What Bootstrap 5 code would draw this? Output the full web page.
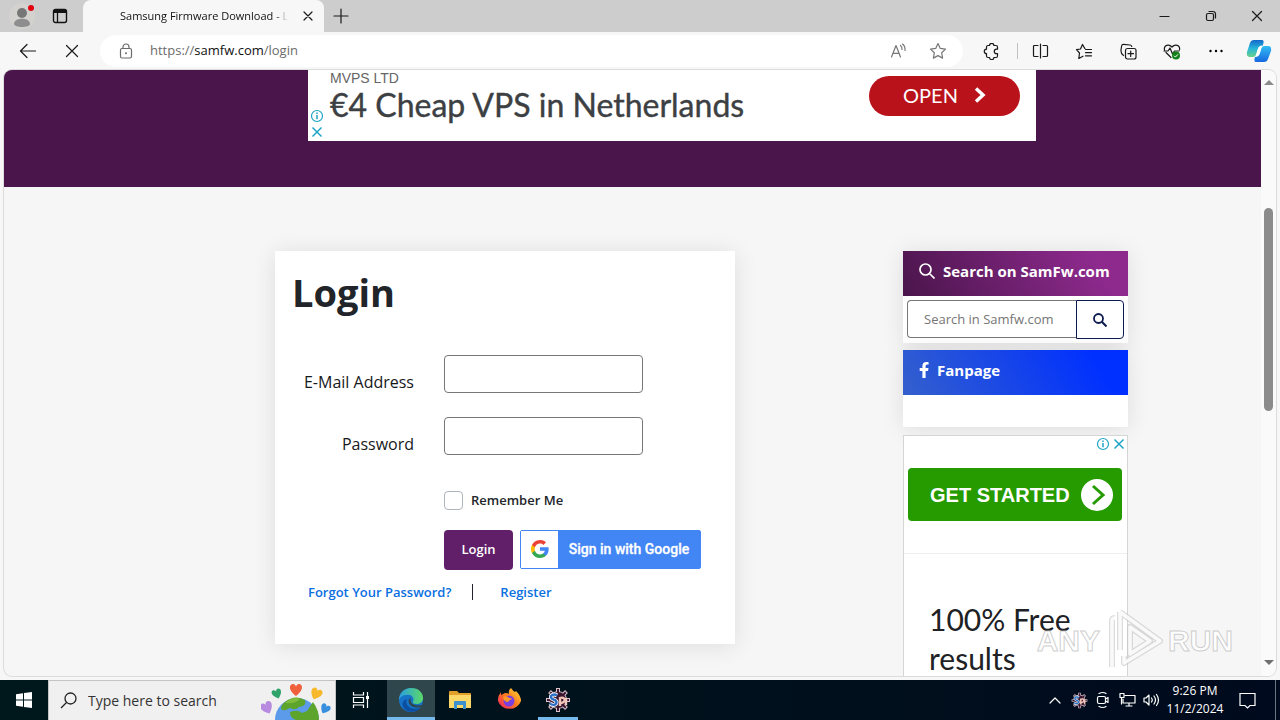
<!DOCTYPE html>
<html lang="en">
<head>
<meta charset="utf-8">
<meta name="viewport" content="width=device-width, initial-scale=1">
<title>Samsung Firmware Download - Login</title>
<link href="https://cdn.jsdelivr.net/npm/bootstrap@5.3.0/dist/css/bootstrap.min.css" rel="stylesheet">
<style>
body{font-family:"Open Sans","Noto Sans",sans-serif;font-size:14px;color:#212529;background:#f7f7f7}
svg{display:block;flex:none}
button{font-family:inherit}
.ico-btn{background:none;border:0;padding:0;width:44px;display:flex;align-items:center;justify-content:center;flex:none;color:#1a1a1a}
.ln{fill:none;stroke:currentColor;stroke-width:1.2;stroke-linecap:round;stroke-linejoin:round}
/* browser frame */
.titlebar{height:32px;background:#cdcdcd}
.win-btn{width:46px}
.tab{width:241px;background:#f7f7f7;border-radius:8px 8px 0 0;padding:0 8px 0 37px;color:#111;font-size:11px}
.tab-title{-webkit-mask-image:linear-gradient(90deg,#000 92%,transparent)}
.toolbar{height:38px;background:#f7f7f7;padding:0 0 0 6px}
.omnibox{height:32px;background:#fff;border-radius:16px;margin:0 6px;padding:0 14px 0 18px;font-size:13px;color:#6b6b6b}
.omnibox b{font-weight:400;color:#111}
.omnibox .ico-btn{width:40px;color:#777}
.viewport{margin:0 4px 4px;border-radius:8px;overflow:hidden;min-height:0;box-shadow:0 0 0 1px #dcdcdc;background:#f6f6f6}
.page{overflow:hidden;min-width:0}
.scroll{width:15px;background:#fafafa;padding:9px 0 10px}
.scroll .thumb{width:9px;flex:0 0 203px;background:#8b8b8b;border-radius:5px}
/* page */
.cols{display:grid;grid-template-columns:271fr 460fr 168fr 225fr 133fr}
.hero{height:117px;background:#4a154b;padding:0 225px 0 304px}
.hero-ad{height:71px;background:#fff;padding:0 16px 0 0}
.hero-ad .ad-name{font:400 14px/16px "Liberation Sans",sans-serif;color:#666}
.hero-ad .ad-head{font:400 32px/38px Lato,sans-serif;color:#3c4043;-webkit-text-stroke:.4px #3c4043}
.ad-marks{color:#1fa5c4}
.open-btn{width:151px;height:40px;border:0;border-radius:20px;background:#b9121b;color:#fff;font:400 20px/38px Lato,sans-serif;margin-top:6px;padding:0 0 2px}
.panel{background:#fff;box-shadow:0 2px 22px rgba(0,0,0,.1)}
.login-panel{height:393px;padding:19px 17px 0;grid-column:2}
.login-panel h1{font-size:38px;line-height:44px;font-weight:700;margin:0 0 41px}
.f-row{display:grid;grid-template-columns:122px 1fr;column-gap:30px;margin-bottom:24px}
.f-row label{font-size:16px;line-height:20px;font-weight:500;text-align:right;padding-top:17px;white-space:nowrap;justify-self:end;color:#16191c}
.f-row .form-control{width:199px;height:38px;border:1px solid #76777a;border-radius:4px}
.f-side{margin-left:152px}
.f-side .form-check-input{width:19px;height:19px;margin:0;border:1px solid #adb5bd;border-radius:4px;float:none}
.f-side label{font-size:13px;font-weight:600}
.login-btn{width:69px;height:40px;border-radius:4px;background:#611f69;border:0;color:#fff;font-size:13px;font-weight:600;padding:0}
.google-btn{width:181px;height:39px;background:#4285f4;border:1px solid #4285f4;border-radius:2px;padding:0;color:#fff;font:500 14px/18px Roboto,sans-serif;-webkit-text-stroke:.3px #fff}
.google-btn .g-box{width:37px;height:37px;background:#fff}
.links{font-size:13px;font-weight:600;padding-left:16px;margin-top:12px;line-height:20px}
.links a{color:#0a6fe0;text-decoration:none}
.links .vr{width:1px;background:#212529;opacity:1;height:16px;margin:2px 27px 0 21px}
.side{grid-column:4;min-width:0}
.side-head{height:45px;padding:0 16px 5px;color:#fff;font-size:15px;font-weight:700;margin:0;white-space:nowrap}
.head-search{background:linear-gradient(60deg,#4a154b,#8e2a8e 85%)}
.head-fan{background:linear-gradient(60deg,#3460cc,#0030ff 85%)}
.search-box{padding:4px 4px 4px}
.search-box .form-control{height:38px;border:1px solid #76777a;border-right:0;border-radius:4px 0 0 4px;font-size:13px;padding:0 16px}
.search-box .form-control::placeholder{color:#757575}
.search-box .btn{width:48px;height:39px;border:1px solid #0b1a4f;border-radius:0 4px 4px 0;background:#fff;color:#0b1a4f;padding:0}
.side-ad{height:260px;background:#fff;border:1px solid #d5d5d5;margin-top:8px}
.start-btn{height:53px;margin:16px 5px 0 4px;background:#259b00;border:0;border-radius:4px;color:#fff;font:700 20px/24px "Liberation Sans",sans-serif;padding:0 9px 0 22px;white-space:nowrap}
.side-ad hr{margin:32px 0 0;border-color:#bbb}
.side-ad p{font:400 30px/39px Lato,sans-serif;color:#202124;padding:46px 25px 0}
.wmark{position:absolute;right:47px;bottom:47px;color:rgba(255,255,255,.8);font:700 30px/60px "Liberation Sans",sans-serif;-webkit-text-stroke:1px rgba(190,190,190,.75);pointer-events:none;gap:4px}
/* taskbar */
.taskbar{height:40px;background:linear-gradient(90deg,#00171c,#00101c 60%,#000a1e);color:#fff}
.taskbar .ico-btn{width:49px;color:#fff}
.taskbar .start{width:48px}
.task-search{width:288px;background:#f0f0f0;border:1px solid #c4c4c4;border-bottom:0;padding-left:11px}
.task-search input{border:0;background:none;color:#333;font-size:14px;outline:0;min-width:0;width:150px;padding:0}
.task-search input::placeholder{color:#333;opacity:1}
.on{border-bottom:3px solid #76b9ed!important;padding-top:3px!important}
.taskbar .edge{background:#30464d}
.taskbar .app{width:40px;margin:0 5px}
.taskbar .tray{width:24px}
.clock{width:64px;font-size:12px;line-height:18px;text-align:center}
.taskbar .note{width:40px}
.desk{width:5px;border-left:1px solid #6c7480;margin-left:8px}
</style>
</head>
<body class="vh-100 d-flex flex-column overflow-hidden">
<svg width="0" height="0" class="position-absolute">
  <symbol id="lens" viewBox="0 0 16 16"><path fill="none" stroke="currentColor" stroke-width="1.700" d="M12 6.500a5.500 5.500 0 1 1-11 0 5.500 5.500 0 0 1 11 0zM10.500 10.500l5 5"/></symbol>
  <symbol id="info" viewBox="0 0 14 14"><circle cx="7" cy="7" r="5.500" fill="none" stroke="currentColor" stroke-width="1.200"/><path stroke="currentColor" stroke-width="1.500" d="M7 6v4.200M7 3.600v1.300"/></symbol>
  <symbol id="cross" viewBox="0 0 14 14"><path fill="none" stroke="currentColor" stroke-width="1.500" d="M2.500 2.500l9 9M11.500 2.500l-9 9"/></symbol>
  <symbol id="gear" viewBox="0 0 26 26"><g fill="#d9c3cc"><circle cx="13" cy="13" r="9"/><path d="M11 1h4v24h-4zM1 11h24v4H1z"/><path d="M11 1h4v24h-4zM1 11h24v4H1z" transform="rotate(45 13 13)"/></g><g fill="#3c1830"><circle cx="13" cy="13" r="8"/><path d="M12 2h2v22h-2zM2 12h22v2H2z"/><path d="M12 2h2v22h-2zM2 12h22v2H2z" transform="rotate(45 13 13)"/></g><path d="M12 8.500C9 6.500 5.500 8 6 10.500s6 2 5.500 5S7 18.500 5 16.500" fill="none" stroke="#fff" stroke-width="4"/><path d="M12 8.500C9 6.500 5.500 8 6 10.500s6 2 5.500 5S7 18.500 5 16.500" fill="none" stroke="#2d6fc4" stroke-width="2.400"/><path d="M15 19v-8c5-2 7 4 1 5M21 11v7" fill="none" stroke="#f2c6b8" stroke-width="2.400"/></symbol>
</svg>

<header>
  <div class="titlebar d-flex">
    <button class="ico-btn" aria-label="Profile"><svg width="34" height="28" viewBox="0 0 34 28"><circle cx="17" cy="14" r="13" fill="#d4d2cf"/><circle cx="17" cy="11" r="5" fill="#777"/><path d="M9 22c0-7 16-7 16 0 0 4-16 4-16 0z" fill="#8e8e8e"/><circle cx="26" cy="6" r="3" fill="#e3000f"/></svg></button>
    <button class="ico-btn pe-2" style="width:39px" aria-label="Tab actions"><svg width="16" height="16" viewBox="0 0 16 16"><rect x="1.500" y="1.500" width="13" height="13" rx="2" fill="none" stroke="#111" stroke-width="1.400"/><path d="M1.500 2h13v3h-13z" fill="#111"/><path d="M5.500 5v9" stroke="#111" stroke-width="1.300"/></svg></button>
    <div class="tab d-flex align-items-center">
      <span class="tab-title text-nowrap">Samsung Firmware Download - L</span>
      <button class="ico-btn ms-auto" style="width:16px" aria-label="Close tab"><svg width="16" height="16" viewBox="0 0 16 16"><path class="ln" d="M4 4l8 8M12 4l-8 8"/></svg></button>
    </div>
    <button class="ico-btn" style="width:34px" aria-label="New tab"><svg width="16" height="16" viewBox="0 0 16 16"><path class="ln" d="M8 1v14M1 8h14"/></svg></button>
    <div class="ms-auto d-flex">
      <button class="ico-btn win-btn" aria-label="Minimise"><svg width="12" height="12" viewBox="0 0 12 12"><path class="ln" d="M1 6.500h9"/></svg></button>
      <button class="ico-btn win-btn" aria-label="Restore"><svg width="12" height="12" viewBox="0 0 12 12"><rect class="ln" x="1.500" y="3.500" width="7" height="7" rx="1.500"/><path class="ln" d="M4 1.500h4a2.500 2.500 0 0 1 2.500 2.500v4"/></svg></button>
      <button class="ico-btn win-btn" aria-label="Close"><svg width="12" height="12" viewBox="0 0 12 12"><path class="ln" d="M1.500 1.500l9 9M10.500 1.500l-9 9"/></svg></button>
    </div>
  </div>
  <div class="toolbar d-flex align-items-center">
    <button class="ico-btn" aria-label="Back"><svg width="18" height="16" viewBox="0 0 18 16"><path class="ln" d="M16.500 8H1.500M8 1.500L1.500 8 8 14.500"/></svg></button>
    <button class="ico-btn" aria-label="Stop"><svg width="14" height="14" viewBox="0 0 14 14"><path class="ln" d="M1.500 1.500l11 11M12.500 1.500l-11 11"/></svg></button>
    <div class="omnibox flex-grow-1 d-flex align-items-center">
      <svg width="16" height="16" viewBox="0 0 16 16"><rect class="ln" x="2.500" y="5.500" width="11" height="9.500" rx="1.500"/><path class="ln" d="M5 5.500V4a3 3 0 0 1 6 0v1.500"/><circle cx="8" cy="10.200" r="1" fill="currentColor"/></svg>
      <span class="ms-3">https://<b>samfw.com</b>/login</span>
      <button class="ico-btn ms-auto" aria-label="Read aloud"><svg width="17" height="16" viewBox="0 0 17 16"><path class="ln" d="M1.500 14L6 2.500 10.500 14M3 10.300h6M10.500 2.500c1.200 1 1.700 2.300 1.500 4M12.500 1c2 1.500 2.800 3.800 2.500 6.500"/></svg></button>
      <button class="ico-btn" aria-label="Favourite" style="margin-right:-9px"><svg width="18" height="18" viewBox="0 0 18 18"><path class="ln" d="M9 1.500l2.300 4.900 5.200.7-3.800 3.700.9 5.300L9 13.600l-4.600 2.500.9-5.300L1.500 7.100l5.200-.7z"/></svg></button>
    </div>
    <button class="ico-btn" aria-label="Extensions"><svg width="17" height="17" viewBox="0 0 17 17"><path class="ln" d="M5 2.500h1.500a2.200 2.200 0 0 1 4.400 0H13q1.500 0 1.500 1.500v2.200h-1a2.200 2.200 0 0 0 0 4.400h1V13q0 1.500-1.500 1.500h-2.100a2.200 2.200 0 0 1-4.400 0H5q-1.500 0-1.500-1.500v-2.400a2.200 2.200 0 0 1 0-4.400V4Q3.500 2.500 5 2.500z"/></svg></button>
    <div style="width:5px"><div class="vr d-block ms-1" style="height:16px"></div></div>
    <button class="ico-btn" aria-label="Split screen"><svg width="17" height="16" viewBox="0 0 17 16"><path class="ln" d="M8.500 1v14M6 2.500H2.500q-1 0-1 1v9q0 1 1 1H6M11 2.500h3.500q1 0 1 1v9q0 1-1 1H11"/></svg></button>
    <button class="ico-btn" aria-label="Favourites"><svg width="18" height="17" viewBox="0 0 18 17"><path class="ln" d="M10 5.500h-.2L7.500 1.500 5.500 6 1.500 6.700 4.500 10l-.7 5.500L8 13.200M10.500 6.500h6M10.500 9.700h6M10.500 12.800h6"/></svg></button>
    <button class="ico-btn" aria-label="Collections"><svg width="17" height="17" viewBox="0 0 17 17"><rect class="ln" x="5.500" y="5.500" width="10.500" height="10.500" rx="2"/><path class="ln" d="M10.700 8v5.500M8 10.700h5.500M3.500 12.500C1 11 .8 9 1 7l.6-4q.3-1.700 2-1.600l6.500.6q1.600.2 1.600 1.500"/></svg></button>
    <button class="ico-btn" aria-label="Performance"><svg width="18" height="17" viewBox="0 0 18 17"><path class="ln" d="M8 14.500L3 9.500M1.500 7C.5 2 6 .5 9 4c3-3.500 8.500-2 7.500 3M1 8h4l2-3 2.500 6L11.500 8H16"/><circle cx="13" cy="12.500" r="4" fill="#14801c"/><path d="M11 12.700l1.400 1.400 2.600-2.800" fill="none" stroke="#fff"/></svg></button>
    <button class="ico-btn" aria-label="More"><svg width="16" height="6" viewBox="0 0 16 6"><circle cx="2.500" cy="3" r="1.200"/><circle cx="8" cy="3" r="1.200"/><circle cx="13.500" cy="3" r="1.200"/></svg></button>
    <button class="ico-btn" style="width:42px" aria-label="Copilot"><svg width="26" height="24" viewBox="0 0 26 24"><defs><linearGradient id="c1" x2="0" y2="1"><stop stop-color="#1267c9"/><stop offset=".5" stop-color="#28b6d9"/><stop offset="1" stop-color="#69d18a"/></linearGradient><linearGradient id="c2" x2="0" y2="1"><stop stop-color="#32bdf2"/><stop offset="1" stop-color="#1668e0"/></linearGradient></defs><path d="M8 1h8q2 0 1.500 3l-1 3q-4 0-5 4l-1.500 5q-1 2-3 2H4q-4 0-3-5l3-9q1-3 4-3z" fill="url(#c1)"/><path d="M18 23h-8q-2 0-1.500-3l.5-2q4 0 5-4l1.500-5q1-2 3-2H22q4 0 3 5l-3 8q-1 3-4 3z" fill="url(#c2)"/><path d="M12.500 8.500q1-2 3.500-2l-2.500 8q-1 3-4 3z" fill="#fff"/></svg></button>
  </div>
</header>

<div class="viewport flex-grow-1 d-flex position-relative">
  <main class="page flex-grow-1">
    <section class="hero">
      <div class="hero-ad d-flex">
        <div class="ad-marks d-flex flex-column justify-content-end me-1 pb-1 ps-1 flex-shrink-0" style="width:14px"><svg width="14" height="14" style="margin:0 0 2px -2px"><use href="#info"/></svg><svg width="14" height="14" style="margin:0 0 -2px -2px"><use href="#cross"/></svg></div>
        <div class="flex-grow-1 text-nowrap ms-1"><div class="ad-name">MVPS LTD</div><div class="ad-head">€4 Cheap VPS in Netherlands</div></div>
        <button class="open-btn d-flex align-items-center justify-content-center flex-shrink-0">OPEN<svg class="ms-3" width="12" height="16" viewBox="0 0 12 16"><path d="M2 1.500L9 8l-7 6.500" fill="none" stroke="#fff" stroke-width="3.500"/></svg></button>
      </div>
    </section>
    <div class="cols" style="padding-top:64px">
      <section class="panel login-panel">
        <h1>Login</h1>
        <form>
          <div class="f-row"><label for="email">E-Mail Address</label><input class="form-control" type="email" id="email"></div>
          <div class="f-row"><label for="pw">Password</label><input class="form-control" type="password" id="pw"></div>
          <div class="f-side d-flex align-items-center gap-2" style="margin-top:36px"><input class="form-check-input" type="checkbox" id="rem"><label for="rem">Remember Me</label></div>
          <div class="f-side d-flex" style="margin-top:19px;gap:7px">
            <button type="button" class="login-btn flex-shrink-0">Login</button>
            <button type="button" class="google-btn d-flex align-items-center flex-shrink-0"><span class="g-box d-flex align-items-center justify-content-center"><svg width="18" height="18" viewBox="0 0 18 18"><path fill="#4285f4" d="M17.640 9.200c0-.64-.06-1.250-.16-1.840H9v3.480h4.840a4.140 4.140 0 0 1-1.800 2.720v2.260h2.910c1.700-1.570 2.690-3.880 2.690-6.620z"/><path fill="#34a853" d="M9 18c2.430 0 4.470-.8 5.960-2.180l-2.910-2.260c-.8.540-1.840.86-3.050.86-2.340 0-4.330-1.580-5.040-3.710H.96v2.330A9 9 0 0 0 9 18z"/><path fill="#fbbc05" d="M3.960 10.710a5.400 5.400 0 0 1 0-3.420V4.960H.96a9 9 0 0 0 0 8.080z"/><path fill="#ea4335" d="M9 3.580c1.320 0 2.510.45 3.440 1.350l2.580-2.580A9 9 0 0 0 .96 4.960l3 2.330C4.670 5.160 6.660 3.580 9 3.580z"/></svg></span><span class="flex-grow-1">Sign in with Google</span></button>
          </div>
          <div class="links d-flex"><a href="#">Forgot Your Password?</a><span class="vr"></span><a href="#">Register</a></div>
        </form>
      </section>
      <aside class="side">
        <div class="panel">
          <h2 class="side-head head-search d-flex align-items-center gap-2"><svg width="16" height="16"><use href="#lens"/></svg>Search on SamFw.com</h2>
          <form class="search-box d-flex"><input class="form-control" type="text" placeholder="Search in Samfw.com" aria-label="Search in Samfw.com"><button type="button" class="btn d-flex align-items-center justify-content-center flex-shrink-0" aria-label="Search"><svg width="14" height="14" viewBox="0 0 14 14"><circle cx="5.500" cy="5.500" r="4.500" fill="none" stroke="currentColor" stroke-width="1.800"/><path d="M8.800 8.800l4.700 4.700" stroke="currentColor" stroke-width="2"/></svg></button></form>
        </div>
        <div class="panel" style="margin-top:7px;height:77px">
          <h2 class="side-head head-fan d-flex align-items-center gap-2"><svg width="10" height="16" viewBox="0 0 10 16"><path fill="#fff" d="M9 9l.5-3H6.600V4.200c0-.8.4-1.600 1.700-1.600h1.300V.2S8.400 0 7.300 0C4.900 0 3.400 1.400 3.400 4v2H.7v3h2.700v7h3.200V9z"/></svg>Fanpage</h2>
        </div>
        <div class="side-ad">
          <div class="ad-marks d-flex justify-content-end" style="gap:2px;padding-right:1px"><svg width="14" height="16"><use href="#info"/></svg><svg width="14" height="16"><use href="#cross"/></svg></div>
          <div class="d-grid"><button class="start-btn d-flex align-items-center justify-content-between">GET STARTED<svg width="32" height="32" viewBox="0 0 32 32"><circle cx="16" cy="16" r="16" fill="#fff"/><path d="M12 7l10 9-10 9" fill="none" stroke="#259b00" stroke-width="3"/></svg></button></div>
          <hr>
          <p>100% Free results</p>
        </div>
      </aside>
    </div>
  </main>
  <div class="scroll d-flex flex-column align-items-center flex-shrink-0">
    <svg width="10" height="6"><path d="M0 6l5-5 5 5z" fill="#8b8b8b"/></svg>
    <div style="flex:123 1 0"></div><div class="thumb"></div><div style="flex:249 1 0"></div>
    <svg width="10" height="6"><path d="M0 0l5 5 5-5z" fill="#707070"/></svg>
  </div>
</div>

<div class="wmark d-flex align-items-center"><span>ANY</span><svg width="60" height="64" viewBox="0 0 60 64" fill="none" stroke-linejoin="round"><path d="M8 58V12q0-3 3-3M16 3v38M16 3l40 29-36 22v-7M26 18v27l20-13z" stroke="#c4c4c4" stroke-opacity=".6" stroke-width="6"/><path d="M8 58V12q0-3 3-3M16 3v38M16 3l40 29-36 22v-7M26 18v27l20-13z" stroke="#fff" stroke-opacity=".85" stroke-width="3.500"/></svg><span>RUN</span></div>

<footer class="taskbar d-flex flex-shrink-0">
  <button class="ico-btn start" aria-label="Start"><svg width="16" height="16" viewBox="0 0 16 16"><path fill="#fff" d="M0 2.200L7 1.200v6.300H0zM8 1l8-1v7.500H8zM0 8.500h7v6.300l-7-1zM8 8.500h8V16l-8-1z"/></svg></button>
  <div class="task-search d-flex align-items-center">
    <svg width="17" height="17" viewBox="0 0 17 17"><circle cx="10.500" cy="6.500" r="5.500" fill="none" stroke="#222" stroke-width="1.300"/><path d="M6.500 10.500L1 16" stroke="#222" stroke-width="1.300"/></svg>
    <input type="text" placeholder="Type here to search" aria-label="Type here to search" style="margin-left:11px">
    <svg class="ms-auto me-1 align-self-end" width="70" height="38" viewBox="0 0 70 38"><defs><path id="heart" d="M0 6C-9-1-6-6-3-6-1-6 0-4 0-3 0-4 1-6 3-6 6-6 9-1 0 6z"/></defs><circle cx="36" cy="38" r="22" fill="#5b9bea"/><path d="M24 20q10-8 20-2 2 6-6 7-4 4-9 1-6 4-9 1 0-4 4-7zM29 30q8-3 12 1l5-2 6-9q6 8 6 18H35q-6-2-6-8z" fill="#5da42c"/><path d="M24 21q8-7 15-4-4 5-15 4z" fill="#80bd3c"/><g><use href="#heart" transform="translate(35 8)" fill="#f0603c"/><use href="#heart" transform="translate(16 12) rotate(-20) scale(.8)" fill="#2fa36a"/><use href="#heart" transform="translate(55 12) rotate(25) scale(.95)" fill="#f7b92b"/><use href="#heart" transform="translate(6 26) rotate(-25)" fill="#b78adf"/><use href="#heart" transform="translate(64 27) rotate(30) scale(.8)" fill="#378fde"/></g></svg>
  </div>
  <button class="ico-btn" style="width:51px;padding-right:2px" aria-label="Task view"><svg width="18" height="16" viewBox="0 0 18 16" fill="none" stroke="#fff" stroke-width="1.200"><path d="M1.500 0v3h10V0M1.500 16v-3h10v3M1.500 5.500h10v5h-10zM15.500 0v16"/><path d="M14 4h3v3h-3z" fill="#fff" stroke="none"/></svg></button>
  <button class="ico-btn edge on" style="width:48px" aria-label="Edge"><svg width="26" height="26" viewBox="0 0 26 26"><defs><linearGradient id="e1"><stop stop-color="#2a9ee0"/><stop offset="1" stop-color="#5ad868"/></linearGradient></defs><circle cx="13" cy="13" r="12" fill="#1673c8"/><path d="M1 13C1 6 6 1 13 1c8 0 12 5 12 10 0 4-3 6-7 6-3 0-4-1-3-2.500C17 11 13 7 9 8c-4 0-7 2-8 5z" fill="url(#e1)"/><path d="M9 12c-3 6 4 12 13 9-4 5-13 5-16 0-3-4-1-8 3-9z" fill="#0b4fa0"/><path d="M13 11c-2 4 2 9 11 7l-1 2c-8 2-14-2-12-8z" fill="#30464d"/></svg></button>
  <button class="ico-btn" aria-label="File Explorer"><svg width="22" height="20" viewBox="0 0 22 20"><path d="M0 2q0-1 1-1h7l2 2h11q1 0 1 1v14H0z" fill="#e0a029"/><path d="M0 5h22v13H0z" fill="#fcd868"/><path d="M5 19v-7q0-1 1-1h10q1 0 1 1v7h-3v-4H8v4z" fill="#3e91cf"/></svg></button>
  <button class="ico-btn" aria-label="Firefox"><svg width="24" height="24" viewBox="0 0 24 24"><defs><linearGradient id="ff" x1="1" x2="0" y2="1"><stop stop-color="#ffe13d"/><stop offset=".5" stop-color="#ff7a1c"/><stop offset="1" stop-color="#f0196c"/></linearGradient></defs><path d="M14 0q2 3 4 4l1-1q5 5 5 10a12 11 0 0 1-23 0q-.5-5 3-9v3l4-2q3 0 4 1-1-4 2-6z" fill="url(#ff)"/><circle cx="12" cy="13" r="5.500" fill="#7a3fe0"/><path d="M6 9q4-2 6 1 3 0 3 1-3 1-4 3-4 0-5-5z" fill="#ff9a24"/></svg></button>
  <button class="ico-btn app on" aria-label="Setup"><svg width="26" height="26"><use href="#gear"/></svg></button>
  <div class="ms-auto d-flex">
    <button class="ico-btn tray" aria-label="Show hidden icons"><svg width="12" height="8" viewBox="0 0 12 8"><path class="ln" d="M1 7l5-5 5 5"/></svg></button>
    <button class="ico-btn tray" aria-label="App"><svg width="17" height="17"><use href="#gear"/></svg></button>
    <button class="ico-btn tray" aria-label="Meet now"><svg width="14" height="18" viewBox="0 0 14 18"><rect class="ln" x="1.500" y="5.500" width="8" height="7" rx="1.500"/><path class="ln" d="M9.500 8L12 6.500v5L9.500 10M3 2.500q4-2 7 0M3 15.500q4 2 7 0"/></svg></button>
    <button class="ico-btn tray" aria-label="Network"><svg width="17" height="16" viewBox="0 0 17 16"><path class="ln" d="M6 3.500h10v7.500H4V7M10 11v3M7 14h6"/><path class="ln" d="M1 1.500h4v4H1zM2.500 5.500V12"/></svg></button>
    <button class="ico-btn tray" aria-label="Volume"><svg width="17" height="14" viewBox="0 0 17 14"><path class="ln" d="M1 5v4h2l3 3V2L3 5zM8.500 5q1.500 2 0 4M11 3q3 4 0 8M13.500 1.500q4 5.500 0 11"/></svg></button>
    <div class="clock d-flex flex-column justify-content-center text-nowrap"><div>9:26 PM</div><div>11/2/2024</div></div>
    <button class="ico-btn note" aria-label="Notifications"><svg width="17" height="17" viewBox="0 0 17 17"><path d="M1 1.500h15v12h-5L8.500 16 6 13.500H1z" fill="none" stroke="#fff" stroke-width="1.200"/></svg></button>
    <div class="desk"></div>
  </div>
</footer>
<script src="https://cdn.jsdelivr.net/npm/bootstrap@5.3.0/dist/js/bootstrap.bundle.min.js"></script>
</body>
</html>
